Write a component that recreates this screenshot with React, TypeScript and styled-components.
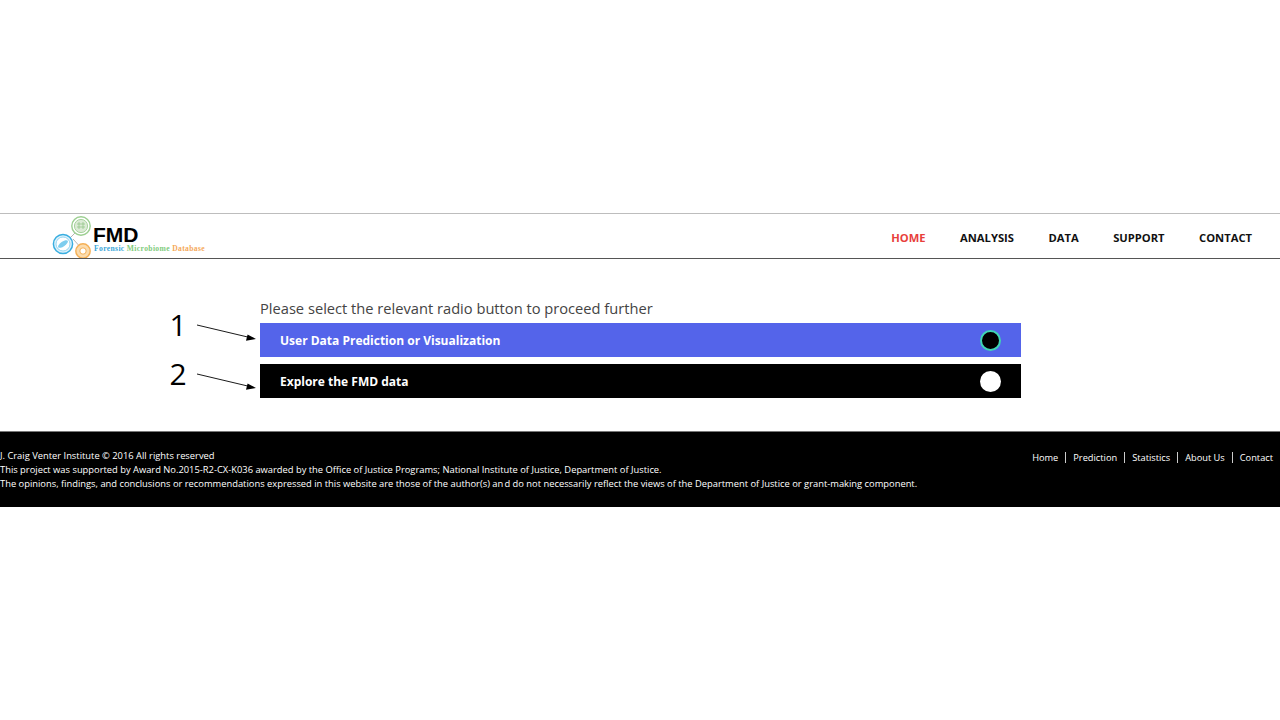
import React from 'react';
import styled, { createGlobalStyle } from 'styled-components';

const Global = createGlobalStyle`
  html, body { margin: 0; padding: 0; background: #fff; }
  body { font-family: "Open Sans", "Liberation Sans", sans-serif; }
`;

const Page = styled.div`
  width: 1280px;
  height: 720px;
  overflow: hidden;
  padding-top: 213px;
  box-sizing: border-box;
`;

const Header = styled.header`
  height: 46px;
  box-sizing: border-box;
  border-top: 1px solid #bdbdbd;
  border-bottom: 1px solid #555;
  display: flex;
  align-items: center;
  justify-content: space-between;
  padding: 0 28px 0 52px;
`;

const Logo = styled.div`
  display: flex;
  align-items: flex-start;
  height: 44px;
`;

const LogoMark = styled.svg`
  width: 42px;
  height: 44px;
  flex: none;
`;

const LogoText = styled.div`
  display: flex;
  flex-direction: column;
  margin-top: 11px;
  margin-left: -1px;
`;

const LogoTitle = styled.span`
  font-family: "Liberation Sans", Arial, sans-serif;
  font-weight: 700;
  font-size: 21px;
  line-height: 20px;
  color: #000;
`;

const LogoSub = styled.span`
  font-family: "Liberation Serif", serif;
  font-weight: 700;
  font-size: 7.6px;
  line-height: 8px;
  margin-left: 1px;
  white-space: nowrap;
  letter-spacing: 0.36px;
`;

const LogoWord = styled.span<{ $c: string }>`
  color: ${p => p.$c};
`;

const Nav = styled.nav`
  display: flex;
  gap: 34.5px;
  margin-top: 4px;
`;

const NavItem = styled.a<{ $active?: boolean }>`
  font-size: 11.2px;
  line-height: 16px;
  font-weight: 700;
  color: ${p => (p.$active ? '#e8403c' : '#111')};
`;

const Main = styled.main`
  height: 172px;
  box-sizing: border-box;
  padding: 39px 0 0 260px;
`;

const Prompt = styled.div`
  font-size: 14.66px;
  line-height: 20px;
  color: #444;
  margin-bottom: 5px;
`;

const Choices = styled.div`
  display: flex;
  flex-direction: column;
  gap: 7px;
  width: 760.5px;
`;

const Choice = styled.div<{ $bg: string }>`
  position: relative;
  height: 34px;
  background: ${p => p.$bg};
  display: flex;
  align-items: center;
  justify-content: space-between;
  padding: 0 20px;
  box-sizing: border-box;
`;

const ChoiceLabel = styled.span`
  color: #fff;
  font-size: 12px;
  font-weight: 700;
`;

const Radio = styled.span<{ $checked?: boolean }>`
  width: 21px;
  height: 21px;
  margin-top: 1px;
  box-sizing: border-box;
  border-radius: 50%;
  background: ${p => (p.$checked ? '#000' : '#fff')};
  border: ${p => (p.$checked ? '2px solid #3fd6b4' : 'none')};
`;

const Callout = styled.div<{ $top: number }>`
  position: absolute;
  left: -92px;
  top: ${p => p.$top}px;
  width: 92px;
  height: 34px;
`;

const CalloutNumber = styled.span`
  position: absolute;
  left: -4px;
  top: -1px;
  width: 28px;
  text-align: center;
  font-size: 30px;
  line-height: 36px;
  color: #000;
`;

const CalloutArrow = styled.svg`
  position: absolute;
  left: 0;
  top: 0;
  width: 92px;
  height: 34px;
  overflow: visible;
`;

const Footer = styled.footer`
  height: 76px;
  box-sizing: border-box;
  background: #000;
  border-top: 1px solid #777;
  padding: 17px 7px 0 0;
  display: flex;
  justify-content: space-between;
  align-items: flex-start;
  color: #fff;
`;

const FooterText = styled.div`
  font-size: 9.36px;
  line-height: 14px;
`;

const Gapped = styled.span`
  letter-spacing: 1.2px;
`;

const FooterLinks = styled.div`
  display: flex;
  margin-top: 1px;
`;

const FooterLink = styled.a`
  font-size: 9.25px;
  line-height: 14px;
  color: #fff;
  padding: 0 7px;
  border-left: 1px solid #ccc;
  height: 11px;
  display: flex;
  align-items: center;
  margin-top: 2px;
  &:first-child { border-left: none; }
  &:last-child { padding-right: 0; }
`;

const Arrow = () => (
  <CalloutArrow viewBox="0 0 92 34">
    <line x1="29" y1="17" x2="86" y2="30.5" stroke="#000" strokeWidth="0.9" />
    <polygon points="88,31 78,32.8 79.6,26.4" fill="#000" />
  </CalloutArrow>
);

export default function App() {
  return (
    <Page>
      <Global />
      <Header>
        <Logo>
          <LogoMark viewBox="0 0 42 44">
            <line x1="29" y1="13" x2="12" y2="30" stroke="#b5b5b5" strokeWidth="1" />
            <line x1="21" y1="25" x2="31" y2="36" stroke="#b5b5b5" strokeWidth="1" />
            <circle cx="29" cy="12" r="9.2" fill="#fff" stroke="#9ccf91" strokeWidth="1.4" />
            <circle cx="29" cy="12" r="6.6" fill="#dcebd6" stroke="#a8d39e" strokeWidth="1" />
            <path d="M25 10h8M25 13h8M27 8v7M31 8v7" stroke="#8cc281" strokeWidth="0.7" fill="none" />
            <circle cx="11" cy="30" r="9.6" fill="#dff2fb" stroke="#39aee0" strokeWidth="1.5" />
            <circle cx="11" cy="30" r="7" fill="#fff" stroke="#7ecdee" strokeWidth="0.8" />
            <ellipse cx="11" cy="30" rx="5.8" ry="2.4" fill="#7ecdee" transform="rotate(-35 11 30)" />
            <circle cx="31" cy="37" r="7.2" fill="#fbdcae" stroke="#f5b056" strokeWidth="1.4" />
            <circle cx="31" cy="37" r="3.2" fill="#fff" stroke="#f5b056" strokeWidth="1" />
          </LogoMark>
          <LogoText>
            <LogoTitle>FMD</LogoTitle>
            <LogoSub>
              <LogoWord $c="#3ba6d8">Forensic </LogoWord>
              <LogoWord $c="#7fcb7c">Microbiome </LogoWord>
              <LogoWord $c="#f5a95a">Database</LogoWord>
            </LogoSub>
          </LogoText>
        </Logo>
        <Nav>
          <NavItem $active>HOME</NavItem>
          <NavItem>ANALYSIS</NavItem>
          <NavItem>DATA</NavItem>
          <NavItem>SUPPORT</NavItem>
          <NavItem>CONTACT</NavItem>
        </Nav>
      </Header>
      <Main>
        <Prompt>Please select the relevant radio button to proceed further</Prompt>
        <Choices>
          <Choice $bg="#5464ea">
            <Callout $top={-15}><CalloutNumber>1</CalloutNumber><Arrow /></Callout>
            <ChoiceLabel>User Data Prediction or Visualization</ChoiceLabel>
            <Radio $checked />
          </Choice>
          <Choice $bg="#000">
            <Callout $top={-7}><CalloutNumber>2</CalloutNumber><Arrow /></Callout>
            <ChoiceLabel>Explore the FMD data</ChoiceLabel>
            <Radio />
          </Choice>
        </Choices>
      </Main>
      <Footer>
        <FooterText>
          <div>J. Craig Venter Institute © 2016 All rights reserved</div>
          <div>This project was supported by Award No.2015-R2-CX-K036 awarded by the Office of Justice Programs; National Institute of Justice, Department of Justice.</div>
          <div>The opinions, findings, and conclusions or recommendations expressed in this website are those of the author(s) a<Gapped>n</Gapped>d do not necessarily reflect the views of the Department of Justice or grant-making component.</div>
        </FooterText>
        <FooterLinks>
          <FooterLink>Home</FooterLink>
          <FooterLink>Prediction</FooterLink>
          <FooterLink>Statistics</FooterLink>
          <FooterLink>About Us</FooterLink>
          <FooterLink>Contact</FooterLink>
        </FooterLinks>
      </Footer>
    </Page>
  );
}
